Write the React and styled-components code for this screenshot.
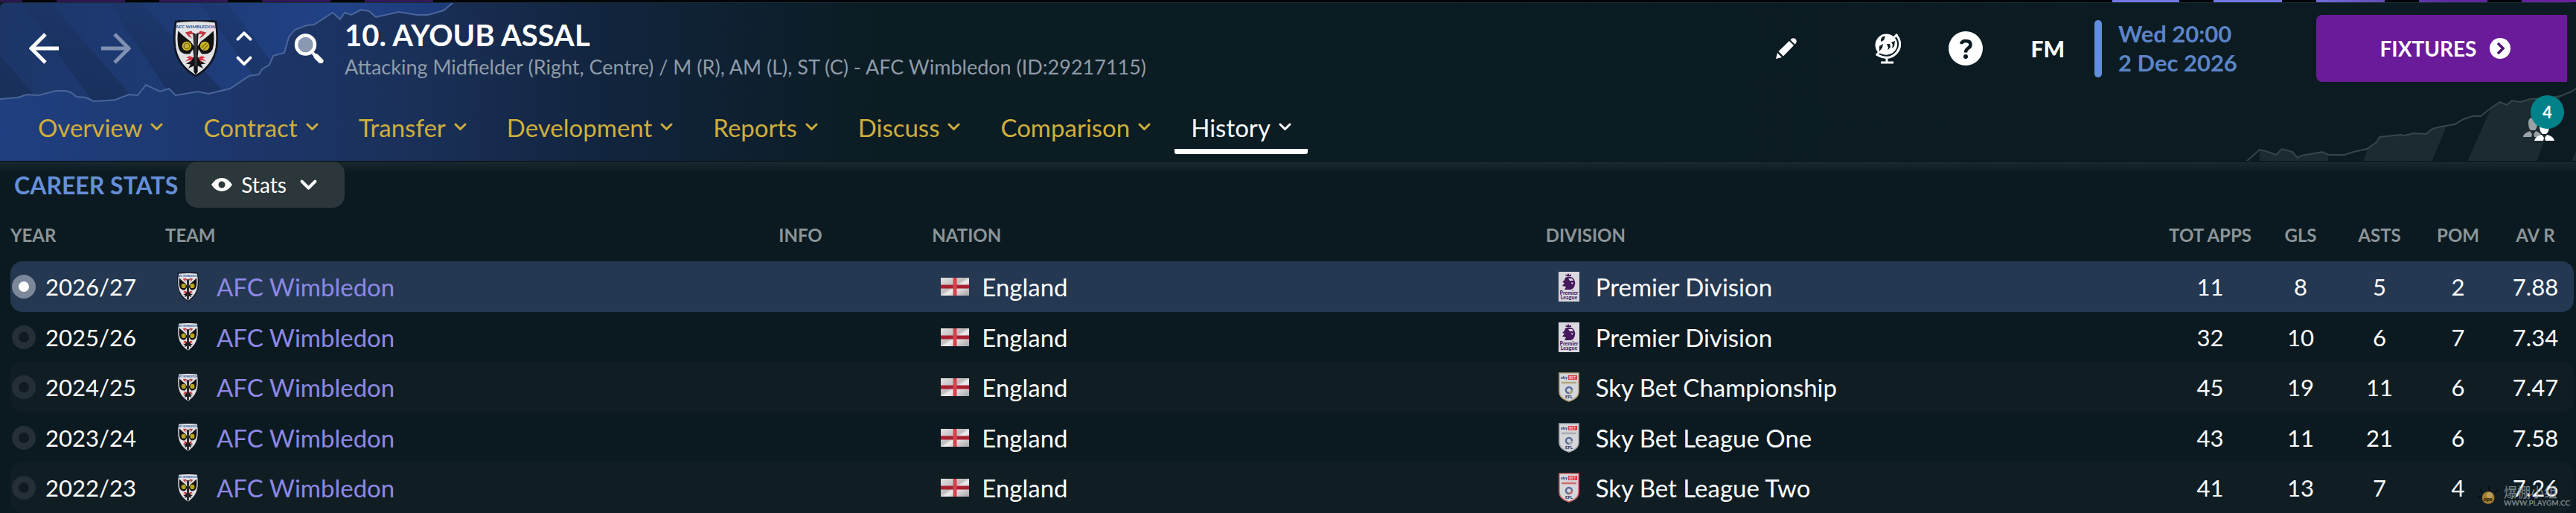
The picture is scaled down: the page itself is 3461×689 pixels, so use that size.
import React from 'react'
import styled, { createGlobalStyle, css } from 'styled-components'

const GlobalStyle = createGlobalStyle`
  * {
    box-sizing: border-box;
  }

  body {
    margin: 0;
    background: #0a1920;
    color: #fff;
    font-family: Lato, 'Noto Sans', 'Noto Sans CJK SC', sans-serif;
  }

  button {
    padding: 0;
    border: 0;
    background: none;
    color: inherit;
    font: inherit;
    cursor: pointer;
  }

  svg {
    display: block;
    flex-shrink: 0;
  }
`

const Page = styled.div`
  position: relative;
  min-height: 100vh;
  background: #0a1920;
  overflow: hidden;
`

const Strip = styled.div`
  height: 3px;
  background:
    repeating-linear-gradient(90deg, transparent 0 30px, #020509 30px 76px, transparent 76px 138px),
    linear-gradient(90deg, #2c1650 0, #321a5c 17%, #020509 18%, #020509 82%, #7478e6 82%, #7478e6 89%, #5b2b9c 95%, #6a1f9e 100%);
`

const Header = styled.header`
  position: relative;
  height: 214px;
  border-top: 1px solid #1c2b33;
  border-bottom: 1px solid #060f13;
  border-radius: 8px 12px 0 0;
  background: linear-gradient(90deg, #203f80 0, #1e3a74 6%, #1a3059 16%, #12253f 23%, #0b1c23 34%, #0b1b21 100%);
  overflow: hidden;
`

const Backdrop = styled.svg`
  position: absolute;
  top: 0;
  ${({ $side }) => ($side === 'left' ? 'left: 0;' : 'right: 0;')}
`

const TopRow = styled.div`
  position: relative;
  display: flex;
  align-items: center;
  justify-content: space-between;
  height: 106px;
  padding: 16px 12px 0 39px;
`

const Group = styled.div`
  display: flex;
  align-items: center;
  gap: ${({ $gap }) => $gap || 0}px;
`

const Stepper = styled.div`
  display: flex;
  flex-direction: column;
  gap: 20px;
  margin: 0 56px 0 -33px;
`

const Player = styled.div`
  margin-left: 28px;
  padding-top: 4px;
`

const Name = styled.h1`
  margin: 0;
  font-size: 40px;
  line-height: 46px;
  font-weight: 700;
`

const Role = styled.p`
  margin: 0;
  font-size: 27px;
  line-height: 40px;
  color: #8f9ba9;
`

const FmLink = styled.a`
  color: #fff;
  font-size: 30px;
  font-weight: 900;
  text-decoration: none;
`

const DateBox = styled.div`
  display: flex;
  align-items: center;
  gap: 22px;
  width: 298px;
  margin-left: 40px;
  font-size: 31px;
  line-height: 39px;
  font-weight: 700;
  color: #5b84c8;

  &::before {
    content: '';
    width: 10px;
    height: 77px;
    border-radius: 5px;
    background: #628fdc;
  }
`

const Fixtures = styled.button`
  display: flex;
  align-items: center;
  justify-content: center;
  gap: 18px;
  width: 337px;
  height: 90px;
  padding-left: 10px;
  border-radius: 8px 0 0 8px;
  background: #6a1b99;
  font-size: 28px;
  font-weight: 700;
`

const Nav = styled.nav`
  position: relative;
  display: flex;
  gap: 10px;
  padding: 24px 0 0 29px;
`

const NavItem = styled.a`
  display: flex;
  align-items: center;
  gap: 11px;
  height: 73px;
  padding: 8px 22px 0;
  border-bottom: 7px solid ${({ $active }) => ($active ? '#fff' : 'transparent')};
  border-radius: 3px;
  color: ${({ $active }) => ($active ? '#fff' : '#cfae3c')};
  font-size: 33px;
  text-decoration: none;
`

const Social = styled.button`
  position: absolute;
  right: 6px;
  top: 124px;
  width: 66px;
  height: 66px;
`

const Badge = styled.span`
  position: absolute;
  top: 0;
  right: 10px;
  width: 45px;
  height: 45px;
  border-radius: 50%;
  background: #01828a;
  font-size: 22px;
  line-height: 45px;
  font-weight: 700;
`

const People = styled.svg`
  position: absolute;
  left: 1px;
  top: 29px;
`

const Panel = styled.main`
  background: linear-gradient(180deg, #1a282f 0, #0b1a20 14px);
`

const PanelHead = styled.div`
  display: flex;
  align-items: center;
  gap: 10px;
  height: 62px;
  padding-left: 19px;
`

const Title = styled.h2`
  margin: 0;
  color: #658fda;
  font-size: 32px;
  font-weight: 700;
`

const ViewPicker = styled.label`
  display: flex;
  align-items: center;
  gap: 12px;
  height: 62px;
  width: 214px;
  padding: 0 37px 0 35px;
  border-radius: 16px;
  background: #2b373b;
`

const ViewSelect = styled.select`
  flex: 1;
  min-width: 0;
  appearance: none;
  border: 0;
  padding: 0;
  background: none;
  color: #fff;
  font-family: inherit;
  font-size: 28px;
`

const Table = styled.table`
  width: calc(100% - 17px);
  margin-left: 14px;
  table-layout: fixed;
  border-spacing: 0;
`

const Th = styled.th`
  height: 72px;
  padding: 0;
  color: #8c9599;
  font-size: 24px;
  font-weight: 700;
  text-align: ${({ $num }) => ($num ? 'center' : 'left')};
  white-space: nowrap;
`

const Td = styled.td`
  padding: 0 0 0 ${({ $pad }) => $pad || 0}px;
  font-size: ${({ $num }) => ($num ? 31 : 33)}px;
  text-align: ${({ $num }) => ($num ? 'center' : 'left')};
  white-space: nowrap;

  &:first-child {
    border-radius: 16px 0 0 16px;
  }

  &:last-child {
    border-radius: 0 16px 16px 0;
  }
`

const Row = styled.tr`
  height: 67px;

  &:nth-child(odd) {
    height: 68px;
  }

  &:nth-child(odd) ${Td} {
    background: #101e24;
  }

  ${({ $selected }) => $selected && css`
    && ${Td} {
      background: #243852;
    }
  `}
`

const Cell = styled.span`
  display: flex;
  align-items: center;
  gap: ${({ $gap }) => $gap}px;
`

const TeamLink = styled.a`
  color: #8d88e6;
  text-decoration: none;
`

const YearLabel = styled.label`
  display: flex;
  align-items: center;
  gap: 13px;
  font-size: 31px;
`

const Radio = styled.input`
  appearance: none;
  width: 32px;
  height: 32px;
  margin: 0;
  border: 9px solid #242f36;
  border-radius: 50%;
  background: #0f1b20;

  &:checked {
    border-color: #7c879a;
    background: #fff;
  }
`

const Watermark = styled.div`
  position: absolute;
  right: 8px;
  bottom: 6px;
  display: flex;
  align-items: center;
  gap: 5px;
  color: #9aa0a2;
  opacity: 0.8;
  pointer-events: none;
`

const WatermarkText = styled.div`
  font-size: 18px;
  line-height: 18px;
  font-family: 'Noto Sans CJK SC', sans-serif;
`

const WatermarkUrl = styled.div`
  font-size: 10px;
  line-height: 12px;
  font-weight: 700;
`

const Chevron = ({ size = 17, width = 3, up }) => (
  <svg width={size} height={size * 0.65} viewBox="0 0 17 11" fill="none" stroke="currentColor" strokeWidth={width} strokeLinecap="round" strokeLinejoin="round">
    <path d={up ? 'M2 9 8.5 2.500 15 9' : 'M2 2 8.500 8.500 15 2'} />
  </svg>
)

const Arrow = ({ flip, color }) => (
  <svg width="40" height="42" viewBox="0 0 40 42" fill="none" stroke={color} strokeWidth="5">
    <path d={flip ? 'M0 21H37M18 2 37 21 18 40' : 'M40 21H3M22 2 3 21 22 40'} />
  </svg>
)

const Crest = ({ width, height }) => (
  <svg width={width} height={height} viewBox="0 0 57 74" preserveAspectRatio="none">
    <path d="M3 2Q28 -1 54 2Q57 20 55 36Q51 60 28.500 73Q6 60 2 36Q0 20 3 2Z" fill="#e2e2e4" stroke="#111622" strokeWidth="2.600" />
    <text x="28.500" y="10.500" textAnchor="middle" fontFamily="Lato, sans-serif" fontSize="6" fontWeight="900" fill="#2b5a9a">AFC WIMBLEDON</text>
    <path d="M15 16 23 14 26 19 20 18 24 24 19 21ZM42 16 34 14 31 19 37 18 33 24 38 21Z" fill="#c3343e" />
    <path d="M6 14 12 20 17 24 22 28 26 34 25 16 28.500 19 32 16 31 34 35 28 40 24 45 20 51 14Q53 28 50 38 46 46 36 44L32 38 31 48 36 54 41 57 35 58 38 63 31 60 31 68 28.500 71 26 68 26 60 19 63 22 58 16 57 21 54 26 48 25 38 21 44Q11 46 7 38 4 28 6 14Z" fill="#121214" />
    <path d="M26.500 18 30.500 18 30 60 27 60Z" fill="#34363a" />
    <path d="M21 47 16 49 20 50 15 54 22 52 22 56 25 49ZM36 47 41 49 37 50 42 54 35 52 35 56 32 49Z" fill="#d8303c" />
    <circle cx="17" cy="34" r="6" fill="#c9b41f" />
    <circle cx="40" cy="34" r="6" fill="#c9b41f" />
    <circle cx="17" cy="34" r="3.500" fill="none" stroke="#6a5c10" />
    <path d="M36 36 42 30M38 39 45 32" stroke="#6a5c10" />
  </svg>
)

const SearchIcon = () => (
  <svg width="40" height="40" viewBox="0 0 40 40">
    <circle cx="15.500" cy="15" r="12.500" fill="#8b98b2" stroke="#fff" strokeWidth="4.500" />
    <path d="M25 26 29 30" stroke="#fff" strokeWidth="4" />
    <path d="M30 31 36 37" stroke="#fff" strokeWidth="7" strokeLinecap="round" />
  </svg>
)

const PencilIcon = () => (
  <svg width="28" height="28" viewBox="0 0 28 28" fill="#fff">
    <path d="M0 28 2 20 8 26ZM3.500 18 18 4 24 10 10 24.500ZM19.500 2.500Q23 -1.500 26.500 1.500 29.500 5 25.500 8.500Z" />
  </svg>
)

const GlobeIcon = () => (
  <svg width="35" height="41" viewBox="0 0 35 41" fill="none" stroke="#fff">
    <circle cx="15.500" cy="15.500" r="15" fill="#fff" stroke="none" />
    <path d="M29 2Q38 14 30 25 19 38 2 28" stroke="#0b1b21" strokeWidth="7" />
    <path d="M8 8Q10 3 14 4L12 9 8 11ZM6 17 11 14 10 19 6 24ZM16 14 20 14 21 18 17 23 18 19ZM22 12 27 10 26 17 23 20 24 15Z" fill="#0b1b21" stroke="none" />
    <path d="M29 2Q38 14 30 25 19 38 2 28" strokeWidth="3" />
    <path d="M26 5 30 1M2 29 6 25M16 32V38" strokeWidth="3" />
    <path d="M8 39H25" strokeWidth="3" />
  </svg>
)

const HelpIcon = () => (
  <svg width="46" height="46" viewBox="0 0 46 46">
    <circle cx="23" cy="23" r="23" fill="#fff" />
    <path d="M17 17Q18 13 23 13 29.500 13 29.500 18 29.500 21 26 23 23 25 23 28.500" fill="none" stroke="#0b1b21" strokeWidth="4.500" />
    <circle cx="23" cy="34" r="3" fill="#0b1b21" />
  </svg>
)

const GoIcon = () => (
  <svg width="28" height="28" viewBox="0 0 28 28">
    <circle cx="14" cy="14" r="14" fill="#fff" />
    <path d="M11 7 18 14 11 21" fill="none" stroke="#4c1270" strokeWidth="3.500" />
  </svg>
)

const EyeIcon = () => (
  <svg width="28" height="18" viewBox="0 0 28 18">
    <path d="M0 9Q6 0 14 0T28 9Q22 18 14 18T0 9Z" fill="#fff" />
    <circle cx="14" cy="9" r="4.500" fill="#2b373b" />
  </svg>
)

const Flag = () => (
  <svg width="38" height="24" viewBox="0 0 38 24">
    <defs>
      <linearGradient id="cloth" x2="1" y2="1">
        <stop offset="0" stopColor="#e4e2e2" />
        <stop offset="0.450" stopColor="#bdbbbc" />
        <stop offset="0.550" stopColor="#efeded" />
        <stop offset="1" stopColor="#a5a4a6" />
      </linearGradient>
    </defs>
    <rect width="38" height="24" fill="url(#cloth)" />
    <path d="M0 12H38" stroke="#a8202f" strokeWidth="5" />
    <path d="M19 0V24" stroke="#d8414f" strokeWidth="5" />
  </svg>
)

const PremierLogo = () => (
  <svg width="28" height="40" viewBox="0 0 28 40">
    <rect width="28" height="40" fill="#d9d8de" />
    <path d="M9 3 11 5 13 2 15 5 17 3 17 6 10 6ZM9 8Q14 5 19 8 23 12 22 17 21 23 16 24L8 24 10 20 5 19 8 15 5 14 8 11Z" fill="#46185c" />
    <path d="M13 9 18 9 20 12 15 12ZM17 14 20 15 18 17Z" fill="#d9d8de" />
    <text x="14" y="31" textAnchor="middle" fontFamily="Lato, sans-serif" fontSize="7" fontWeight="900" fill="#46185c">Premier</text>
    <text x="14" y="37" textAnchor="middle" fontFamily="Lato, sans-serif" fontSize="7" fontWeight="900" fill="#46185c">League</text>
  </svg>
)

const EflLogo = ({ trim }) => (
  <svg width="28" height="40" viewBox="0 0 28 40">
    <path d="M1 1H27V26Q27 35 14 39 1 35 1 26Z" fill="#d5d6d8" stroke={trim} strokeWidth="1.500" />
    <rect x="13" y="4" width="12" height="6" fill="#d93a40" />
    <text x="3" y="9" fontFamily="Lato, sans-serif" fontSize="6" fontWeight="900" fill="#26407e">sky</text>
    <text x="14" y="9" fontFamily="Lato, sans-serif" fontSize="5" fontWeight="900" fill="#f3c6c8">BET</text>
    <path d="M4 14H24" stroke={trim} strokeWidth="2.500" />
    <circle cx="14" cy="24" r="4" fill="none" stroke="#5a6b9c" strokeWidth="2.500" />
    <path d="M14 28A4 4 0 0 0 18 24" fill="none" stroke={trim} strokeWidth="2.500" />
    <text x="14" y="35" textAnchor="middle" fontFamily="Lato, sans-serif" fontSize="6" fontWeight="900" fill="#26345e">EFL</text>
  </svg>
)

const LEFT_EDGE = 'L608 0 596 10 575 16 560 16 536 12 505 19 496 11 485 9 472 16 463 13 457 22 447 13 422 29 412 30 396 36 388 46 382 67 367 71 362 83 352 89 348 96 335 98 309 115 280 122 266 119 236 124 227 115 215 119 196 110 185 124 173 123 155 130 144 131 126 132 115 127 103 126 95 120 88 118 75 118 52 124 36 123 24 127 0 129'
const RIGHT_EDGE = 'M18 213 36 197 44 199 58 204 66 196 80 200 87 208 92 205 120 200 129 204 150 204 162 200 180 196 193 187 197 180 225 177 230 178 243 175 260 176 268 169 280 166 298 163 310 156 322 152 333 152 348 140 359 133 368 137 375 131 386 133 400 129 420 128 440 125 455 119 461 115'

const tabs = ['Overview', 'Contract', 'Transfer', 'Development', 'Reports', 'Discuss', 'Comparison', 'History']

const seasons = [
  { year: '2026/27', division: 'Premier Division', stats: ['11', '8', '5', '2', '7.88'] },
  { year: '2025/26', division: 'Premier Division', stats: ['32', '10', '6', '7', '7.34'] },
  { year: '2024/25', division: 'Sky Bet Championship', trim: '#b3a77c', stats: ['45', '19', '11', '6', '7.47'] },
  { year: '2023/24', division: 'Sky Bet League One', trim: '#a9aeb3', stats: ['43', '11', '21', '6', '7.58'] },
  { year: '2022/23', division: 'Sky Bet League Two', trim: '#cf6a6c', stats: ['41', '13', '7', '4', '7.26'] },
]

function TopBar() {
  return (
    <Header>
      <Backdrop $side="left" width="610" height="140" viewBox="0 0 610 140">
        <defs>
          <clipPath id="torn">
            <path d={`M0 0${LEFT_EDGE}Z`} />
          </clipPath>
          <linearGradient id="sky">
            <stop offset="0" stopColor="#1c3668" />
            <stop offset="0.400" stopColor="#1e3b76" />
            <stop offset="0.750" stopColor="#214287" />
            <stop offset="1" stopColor="#1d3a78" />
          </linearGradient>
          <linearGradient id="streak" x2="0" y2="1">
            <stop offset="0" stopColor="#14284a" stopOpacity="0.150" />
            <stop offset="1" stopColor="#14284a" stopOpacity="0.550" />
          </linearGradient>
        </defs>
        <g clipPath="url(#torn)">
          <rect width="610" height="140" fill="url(#sky)" />
          <path d="M30 0H68L190 140H130ZM146 0H190L320 140H240ZM268 0H306L410 140H372ZM0 70 60 140H0Z" fill="url(#streak)" />
        </g>
        <path d={`M609 -2${LEFT_EDGE}`} fill="none" stroke="#4a659b" strokeWidth="2" />
      </Backdrop>
      <Backdrop $side="right" width="461" height="213" viewBox="0 0 461 213">
        <defs>
          <clipPath id="ridge">
            <path d={`${RIGHT_EDGE}V213Z`} />
          </clipPath>
        </defs>
        <path d="M36 100V213H128L128 100ZM215 100 175 213H267L315 100ZM365 100 315 213H408L450 100ZM480 150 455 213H461Z" fill="#1c2a31" clipPath="url(#ridge)" />
        <path d={RIGHT_EDGE} fill="none" stroke="#36454b" strokeWidth="2" />
      </Backdrop>
      <TopRow>
        <Group>
          <Group $gap={57}>
            <button aria-label="Back"><Arrow color="#fff" /></button>
            <button aria-label="Forward"><Arrow flip color="#8090b0" /></button>
            <Crest width={60} height={76} />
            <Stepper>
              <button aria-label="Previous player"><Chevron up size={22} /></button>
              <button aria-label="Next player"><Chevron size={22} /></button>
            </Stepper>
          </Group>
          <button aria-label="Search"><SearchIcon /></button>
          <Player>
            <Name>10. AYOUB ASSAL</Name>
            <Role>Attacking Midfielder (Right, Centre) / M (R), AM (L), ST (C) - AFC Wimbledon (ID:29217115)</Role>
          </Player>
        </Group>
        <Group>
          <Group $gap={64}>
            <Group $gap={105}>
              <button aria-label="Edit"><PencilIcon /></button>
              <button aria-label="World"><GlobeIcon /></button>
            </Group>
            <button aria-label="Help"><HelpIcon /></button>
            <FmLink href="#fm">FM</FmLink>
          </Group>
          <DateBox><span>Wed 20:00<br />2 Dec 2026</span></DateBox>
          <Fixtures>FIXTURES <GoIcon /></Fixtures>
        </Group>
      </TopRow>
      <Nav>
        {tabs.map((tab) => (
          <NavItem key={tab} href={`#${tab.toLowerCase()}`} $active={tab === 'History'}>
            {tab} <Chevron />
          </NavItem>
        ))}
      </Nav>
      <Social aria-label="Social, 4 new">
        <People width="42" height="34" viewBox="0 0 42 34">
          <path d="M7 8Q7 1 13 1T19 8Q19 15 16 18H10Q7 15 7 8ZM0 27Q0 22 9 19L12 23 11 27ZM15 27 14 23 17 19Q24 21 25 27Z" fill="#9aa1a4" />
          <path d="M22 12H35Q35 20 31 23H26Q22 20 22 12ZM15 32Q16 26 25 24L28 28 27 32ZM30 32 29 28 32 24Q41 26 42 32Z" fill="#fff" />
        </People>
        <Badge>4</Badge>
      </Social>
    </Header>
  )
}

function CareerTable() {
  return (
    <Table>
      <colgroup>
        <col width="208" />
        <col />
        <col width="206" />
        <col />
        <col />
        <col width="137" />
        <col width="106" />
        <col width="106" />
        <col width="105" />
        <col width="103" />
      </colgroup>
      <thead>
        <tr>
          <Th>YEAR</Th>
          <Th>TEAM</Th>
          <Th>INFO</Th>
          <Th>NATION</Th>
          <Th>DIVISION</Th>
          <Th $num>TOT APPS</Th>
          <Th $num>GLS</Th>
          <Th $num>ASTS</Th>
          <Th $num>POM</Th>
          <Th $num>AV R</Th>
        </tr>
      </thead>
      <tbody>
        {seasons.map((season, i) => (
          <Row key={season.year} $selected={i === 0}>
            <Td $pad={2}>
              <YearLabel>
                <Radio type="radio" name="season" defaultChecked={i === 0} />
                {season.year}
              </YearLabel>
            </Td>
            <Td $pad={16}>
              <Cell $gap={24}>
                <Crest width={29} height={39} />
                <TeamLink href="#team">AFC Wimbledon</TeamLink>
              </Cell>
            </Td>
            <Td />
            <Td $pad={12}>
              <Cell $gap={17}><Flag /> England</Cell>
            </Td>
            <Td $pad={17}>
              <Cell $gap={22}>
                {season.trim ? <EflLogo trim={season.trim} /> : <PremierLogo />}
                {season.division}
              </Cell>
            </Td>
            {season.stats.map((value, n) => (
              <Td key={n} $num>{value}</Td>
            ))}
          </Row>
        ))}
      </tbody>
    </Table>
  )
}

function App() {
  return (
    <Page>
      <GlobalStyle />
      <Strip />
      <TopBar />
      <Panel>
        <PanelHead>
          <Title>CAREER STATS</Title>
          <ViewPicker>
            <EyeIcon />
            <ViewSelect aria-label="View">
              <option>Stats</option>
            </ViewSelect>
            <Chevron size={23} width={3} />
          </ViewPicker>
        </PanelHead>
        <CareerTable />
      </Panel>
      <Watermark>
        <svg width="30" height="34" viewBox="0 0 36 34">
          <path d="M8 12 3 6M18 8V1M27 12 33 7M6 19 0 18" stroke="#05090b" strokeWidth="2" />
          <circle cx="17" cy="20" r="10" fill="#c8952f" />
          <circle cx="19" cy="16" r="5" fill="#e3bd62" />
          <text x="9" y="25" fontFamily="Lato, sans-serif" fontSize="9" fontWeight="900" fill="#241a08">ops</text>
        </svg>
        <div>
          <WatermarkText>爆棚小组</WatermarkText>
          <WatermarkUrl>WWW.PLAYGM.CC</WatermarkUrl>
        </div>
      </Watermark>
    </Page>
  )
}

export default App
